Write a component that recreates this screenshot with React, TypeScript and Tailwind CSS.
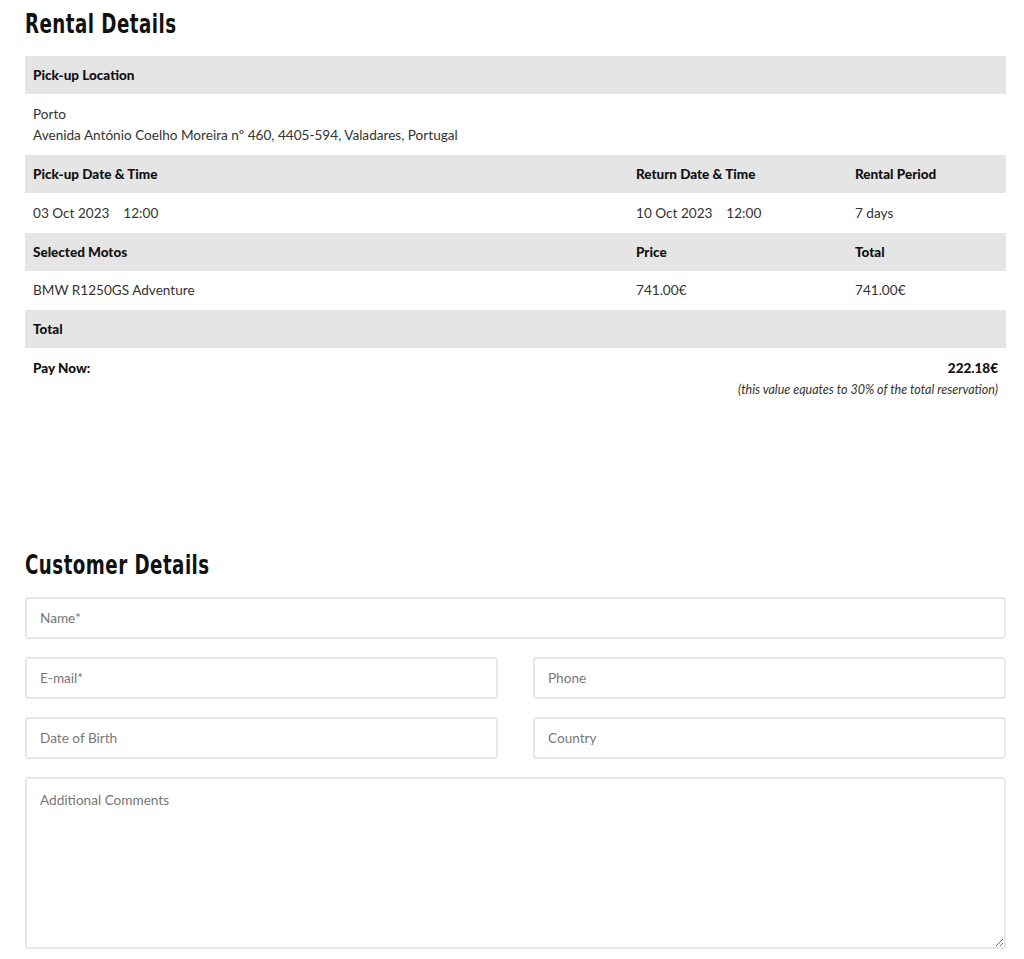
import React from "react";

const body = { fontFamily: "Lato, 'Noto Sans', sans-serif" } as React.CSSProperties;

function Heading({ children }: { children: React.ReactNode }) {
  return (
    <h2 className="font-['DejaVu_Sans_Condensed','Liberation_Sans',sans-serif] font-bold text-[26px] leading-[34px] text-[#111] tracking-[0.6px] origin-left scale-x-[0.78] whitespace-nowrap">
      {children}
    </h2>
  );
}

function HeadRow({ cells }: { cells: string[] }) {
  return (
    <div className="grid grid-cols-[603px_219px_159px] bg-[#e5e5e5] h-[38px] items-center text-[13.5px] font-black text-[#111]">
      {cells.map((c, i) => (
        <div key={i} className="pl-2">{c}</div>
      ))}
    </div>
  );
}

function DataRow({ cells, tall }: { cells: string[]; tall?: boolean }) {
  return (
    <div className={"grid grid-cols-[603px_219px_159px] items-center text-[13.6px] text-[#333] " + (tall ? "h-[40px]" : "h-[39px]")}>
      {cells.map((c, i) => (
        <div key={i} className="pl-2 whitespace-pre">{c}</div>
      ))}
    </div>
  );
}

function Field({ label }: { label: string }) {
  return (
    <div className="h-[42px] border-2 border-[#e8e8e8] rounded-[3px] flex items-center pl-[13px] text-[13.6px] text-[#777] bg-white">
      {label}
    </div>
  );
}

export default function App() {
  return (
    <div className="bg-white w-[1024px] min-h-[959px] px-[25px] pt-[7px] pb-[10px]" style={body}>
      <Heading>Rental Details</Heading>
      <div className="mt-[15px] w-[981px]">
        <HeadRow cells={["Pick-up Location", "", ""]} />
        <div className="pl-2 pt-[10px] pb-[9px] text-[13.6px] leading-[21px] text-[#333]">
          <div>Porto</div>
          <div>Avenida António Coelho Moreira nº 460, 4405-594, Valadares, Portugal</div>
        </div>
        <HeadRow cells={["Pick-up Date & Time", "Return Date & Time", "Rental Period"]} />
        <DataRow tall cells={["03 Oct 2023    12:00", "10 Oct 2023    12:00", "7 days"]} />
        <HeadRow cells={["Selected Motos", "Price", "Total"]} />
        <DataRow cells={["BMW R1250GS Adventure", "741.00€", "741.00€"]} />
        <HeadRow cells={["Total", "", ""]} />
        <div className="px-2 pt-[12px] text-[13.5px] text-[#111]">
          <div className="flex justify-between font-black leading-[16px]">
            <span>Pay Now:</span>
            <span>222.18€</span>
          </div>
          <div className="text-right italic text-[12.5px] leading-[14px] text-[#333] mt-[7px]">
            (this value equates to 30% of the total reservation)
          </div>
        </div>
      </div>

      <div className="mt-[151px]">
        <Heading>Customer Details</Heading>
      </div>
      <div className="mt-[15px] w-[981px] flex flex-col gap-[18px]">
        <Field label="Name*" />
        <div className="grid grid-cols-2 gap-x-[35px] gap-y-[18px]">
          <Field label="E-mail*" />
          <Field label="Phone" />
          <Field label="Date of Birth" />
          <Field label="Country" />
        </div>
        <textarea
          placeholder="Additional Comments"
          className="h-[172px] border-2 border-[#e8e8e8] rounded-[3px] px-[13px] pt-[11px] text-[13.6px] placeholder:text-[#777] outline-none resize-y"
          style={body}
        />
      </div>
    </div>
  );
}
